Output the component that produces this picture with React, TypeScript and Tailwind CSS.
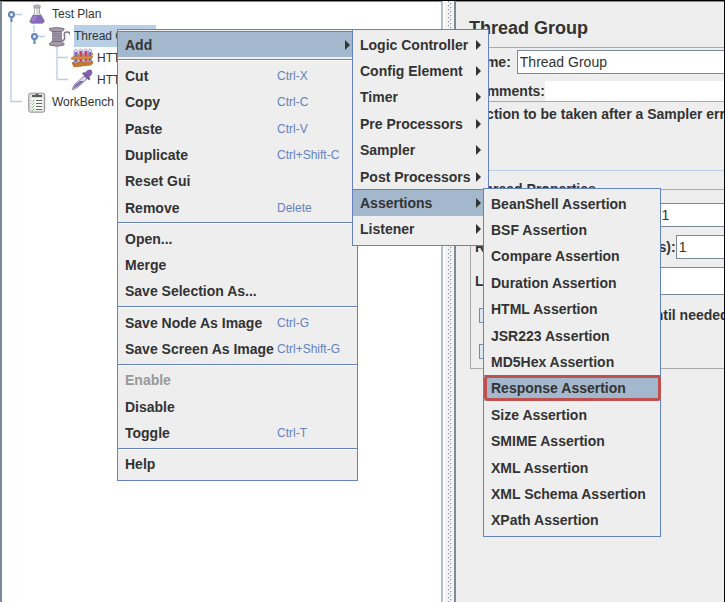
import type { ReactNode } from "react";

type Entry = { label: string; keys?: string; submenu?: boolean; active?: boolean; disabled?: boolean; marked?: boolean };

const contextGroups: Entry[][] = [
  [{ label: "Add", submenu: true, active: true }],
  [
    { label: "Cut", keys: "Ctrl-X" },
    { label: "Copy", keys: "Ctrl-C" },
    { label: "Paste", keys: "Ctrl-V" },
    { label: "Duplicate", keys: "Ctrl+Shift-C" },
    { label: "Reset Gui" },
    { label: "Remove", keys: "Delete" },
  ],
  [{ label: "Open..." }, { label: "Merge" }, { label: "Save Selection As..." }],
  [
    { label: "Save Node As Image", keys: "Ctrl-G" },
    { label: "Save Screen As Image", keys: "Ctrl+Shift-G" },
  ],
  [{ label: "Enable", disabled: true }, { label: "Disable" }, { label: "Toggle", keys: "Ctrl-T" }],
  [{ label: "Help" }],
];

const addEntries: Entry[] = [
  { label: "Logic Controller", submenu: true },
  { label: "Config Element", submenu: true },
  { label: "Timer", submenu: true },
  { label: "Pre Processors", submenu: true },
  { label: "Sampler", submenu: true },
  { label: "Post Processors", submenu: true },
  { label: "Assertions", submenu: true, active: true },
  { label: "Listener", submenu: true },
];

const assertionEntries: Entry[] = [
  { label: "BeanShell Assertion" },
  { label: "BSF Assertion" },
  { label: "Compare Assertion" },
  { label: "Duration Assertion" },
  { label: "HTML Assertion" },
  { label: "JSR223 Assertion" },
  { label: "MD5Hex Assertion" },
  { label: "Response Assertion", active: true, marked: true },
  { label: "Size Assertion" },
  { label: "SMIME Assertion" },
  { label: "XML Assertion" },
  { label: "XML Schema Assertion" },
  { label: "XPath Assertion" },
];

function MenuItem({ entry }: { entry: Entry }) {
  const look = entry.active ? "bg-[#a3b8cc] border-[#6382bf]" : "border-transparent";
  return (
    <button
      type="button"
      role="menuitem"
      disabled={entry.disabled}
      aria-haspopup={entry.submenu ? "menu" : undefined}
      className={`relative flex min-h-0 w-full flex-1 items-center whitespace-nowrap border-t pl-[7px] text-left text-sm font-bold ${look} ${entry.disabled ? "text-[#999999]" : "text-[#333333]"}`}
    >
      <span className="flex-1">{entry.label}</span>
      {entry.keys && <span className="w-20 text-xs font-normal text-[#6382bf]">{entry.keys}</span>}
      {entry.submenu && (
        <svg className="mr-[7px] h-[10px] w-[5px]" viewBox="0 0 5 10" aria-hidden="true">
          <path d="M0 0L5 5L0 10Z" fill="#333333" />
        </svg>
      )}
      {entry.marked && <span className="absolute -right-px -top-px bottom-0 left-0 rounded-sm border-[3px] border-[#c0504d]" />}
    </button>
  );
}

function Menu({ label, place, children }: { label: string; place: string; children: ReactNode }) {
  return (
    <div role="menu" aria-label={label} className={`absolute flex flex-col border border-[#6382bf] bg-[#eeeeee] pb-[3px] pt-px ${place}`}>
      {children}
    </div>
  );
}

function FlaskIcon() {
  return (
    <svg width="20" height="20" viewBox="0 0 20 20" aria-hidden="true">
      <path d="M7.500 3h5v6l4.500 7q1 3-2 3.500H5Q2 19 3 16l4.500-7z" fill="#d8d8df" stroke="#95959e" strokeWidth="0.800" />
      <path d="M6 11h8l3 5q1 2.500-2 3H5q-2.500-.5-1.500-3z" fill="#8468bb" />
      <path d="M5.500 14l2-2.500h3l-3 5.500H4.500z" fill="#a58bd1" opacity=".7" />
      <ellipse cx="10" cy="2.500" rx="3.500" ry="1.500" fill="#bcbcc4" stroke="#85858d" strokeWidth=".8" />
      <path d="M8.500 5v5" stroke="#fff" strokeWidth="1.300" />
    </svg>
  );
}

function SpoolIcon() {
  return (
    <svg width="22" height="21" viewBox="0 0 22 21" aria-hidden="true">
      <path d="M4 4h10v13H4z" fill="#8d8295" />
      <path d="M4 6.500h10M4 9h10M4 11.500h10M4 14h10" stroke="#a297aa" />
      <path d="M1.500 2.500Q8 .3 16 2.500v1.500L13.500 5.500H4L1.500 4z" fill="#a49aaa" stroke="#706779" strokeWidth=".8" />
      <path d="M4 15.500h10l2 2v1.500Q9 21.500 1.500 19v-1.500z" fill="#a49aaa" stroke="#706779" strokeWidth=".8" />
      <path d="M14 15q3.500-1 2.500-5T19 6t2.500 2.500" fill="none" stroke="#81768a" strokeWidth="1.500" />
    </svg>
  );
}

function TubesIcon() {
  return (
    <svg width="22" height="20" viewBox="0 0 22 20" aria-hidden="true">
      <path d="M3 6l19-1v2L3 9.500zM1 14l19-1 2 1-2 3-17 2z" fill="#bf7632" />
      <g stroke="#9991b3" strokeWidth=".7">
        <rect x="3" y="1.500" width="3.500" height="14" rx="1.700" fill="#e3dff2" />
        <rect x="8" y="1" width="3.500" height="14" rx="1.700" fill="#e3dff2" />
        <rect x="13" y="1" width="3.500" height="14" rx="1.700" fill="#e3dff2" />
        <rect x="17.500" y="1" width="3" height="13" rx="1.500" fill="#e3dff2" />
      </g>
      <path d="M3.500 4h2.600v10H3.500zM17.800 4h2.300v9h-2.300z" fill="#7868c2" />
      <path d="M8.500 3h2.600v11H8.500z" fill="#d43f60" />
      <path d="M13.500 3h2.600v10.500h-2.600z" fill="#c33e72" />
      <path d="M.5 9.500l2-1 19-.5v1.500l-2 1.500-19 .5z" fill="#d58b43" stroke="#986029" strokeWidth=".4" />
      <path d="M1 15l19-1 2-1v2l-2 2-17 2z" fill="#c6782f" stroke="#986029" strokeWidth=".4" />
    </svg>
  );
}

function DropperIcon() {
  return (
    <svg width="22" height="22" viewBox="0 0 22 22" aria-hidden="true">
      <path d="M13 7l3 3-9 8-5 3-1-1 3-5z" fill="#d9d4e6" stroke="#8f88a0" strokeWidth=".9" />
      <path d="M4 16l5-4h4l-6 5-5 3z" fill="#8266b8" />
      <path d="M14 4q3-4 6-3 2 2 0 5l-3 3z" fill="#8162b5" stroke="#6f52a3" strokeWidth=".6" />
      <path d="M11 4.500l7 7 1.500-2-6.500-6.500z" fill="#75579f" />
    </svg>
  );
}

function ClipboardIcon() {
  return (
    <svg width="18" height="21" viewBox="0 0 18 21" aria-hidden="true">
      <rect x=".7" y="1.200" width="16" height="19" rx="2" fill="#dedede" stroke="#929292" />
      <path d="M3 6h11.500v12.500H3z" fill="#fbfbfb" />
      <path d="M4 5V3h3q2-3 4 0h3v2z" fill="#5d5d5d" />
      <path d="M8 8.500h6M8 11.500h6M8 14.500h6M8 17.500h6" stroke="#666" strokeWidth="1.200" />
      <path d="M3.500 8.500l1 1 2-2M3.500 11.500l1 1 2-2M3.500 14.500l1 1 2-2M3.500 17.500l1 1 2-2" fill="none" stroke="#69b957" />
    </svg>
  );
}

function TreeLines() {
  return (
    <svg className="absolute left-0 top-0" width="72" height="112" viewBox="0 0 72 112" fill="none" aria-hidden="true">
      <path d="M9 15V99.500H20M32 23V30M55 44V77.500H66M55 55.500H66M13 12.500h7M36 34.500h7" stroke="#b8cfe5" strokeWidth="1.300" />
      <g stroke="#6285ba" strokeWidth="2">
        <circle cx="9.500" cy="12.500" r="2.500" fill="#e8f1fb" />
        <path d="M9.500 15v5" />
        <circle cx="32.500" cy="34.500" r="2.500" fill="#e8f1fb" />
        <path d="M32.500 37v5" />
      </g>
    </svg>
  );
}

function TreeRow({ icon, indent, children }: { icon: ReactNode; indent: string; children: ReactNode }) {
  return (
    <li className={`flex h-[22px] items-center gap-1 whitespace-nowrap ${indent}`}>
      <span className="flex w-[22px] justify-center">{icon}</span>
      {children}
    </li>
  );
}

const field = "h-6 min-w-0 flex-1 border border-r-0 border-[#7a8a99] bg-white px-[2px] font-normal outline-none";

export default function App() {
  return (
    <div className="relative flex min-h-screen overflow-hidden border-r border-t border-black bg-[#eeeeee] font-['Liberation_Sans',Arial,sans-serif] text-sm text-[#333333]">
      <aside className="relative w-[443px] shrink-0 border-l-2 border-r-2 border-t border-l-[#7a8a99] border-r-[#b3bfcd] border-t-[#7a8a99] bg-white">
        <TreeLines />
        <ul className="relative pt-px text-xs">
          <TreeRow icon={<FlaskIcon />} indent="pl-6">Test Plan</TreeRow>
          <TreeRow icon={<SpoolIcon />} indent="pl-[46px]">
            <span className="flex h-[22px] w-[82px] items-center bg-[#b8cfe5]">Thread Group</span>
          </TreeRow>
          <TreeRow icon={<TubesIcon />} indent="pl-[69px]">HTTP Request Defaults</TreeRow>
          <TreeRow icon={<DropperIcon />} indent="pl-[69px]">HTTP Request</TreeRow>
          <TreeRow icon={<ClipboardIcon />} indent="pl-6">WorkBench</TreeRow>
        </ul>
      </aside>

      <div className="flex w-[11px] shrink-0 justify-end border-l-2 border-white bg-[#f4f4f4] pr-[2px]" role="separator" aria-orientation="vertical">
        <svg className="h-full w-[5px]" aria-hidden="true">
          <defs>
            <pattern id="grip" width="5" height="4" patternUnits="userSpaceOnUse">
              <path d="M1 0h1v1H1zM3 2h1v1H3z" fill="#8593a3" />
              <path d="M2 0h1v1H2zM1 1h1v1H1zM4 2h1v1H4zM3 3h1v1H3z" fill="#d5dae0" />
            </pattern>
          </defs>
          <rect width="5" height="100%" fill="url(#grip)" />
        </svg>
      </div>

      <main className="min-w-0 flex-1 overflow-hidden whitespace-nowrap border-l-2 border-t border-[#7a8a99] font-bold">
        <h1 className="ml-[13px] pb-[7px] pt-[14px] text-lg leading-6">Thread Group</h1>
        <div className="ml-3 border-t border-[#aaaaaa] pt-[2px]">
          <div className="flex items-center gap-1.5">
            <label htmlFor="name">Name:</label>
            <input id="name" className={field} defaultValue="Thread Group" />
          </div>
          <div className="mt-[7px] flex h-5 items-center">
            <label htmlFor="comments">Comments:</label>
            <input id="comments" className="h-5 min-w-0 flex-1 bg-white outline-none" />
          </div>
        </div>
        <section className="ml-3 h-[70px] border-b border-t border-b-[#b8cfe5] border-t-[#aaaaaa] pl-2 pt-[2px]">
          <h2>Action to be taken after a Sampler error</h2>
        </section>
        <fieldset className="ml-[14px] mt-2 h-[190px] border border-r-0 border-[#aaaaaa] pl-1">
          <legend className="px-px">Thread Properties</legend>
          <div className="flex flex-col gap-2 pt-1">
            <div className="flex items-center">
              <label htmlFor="threads">Number of Threads (users):</label>
              <input id="threads" className={field} defaultValue="1" />
            </div>
            <div className="flex items-center">
              <label htmlFor="ramp">Ramp-Up Period (in seconds):</label>
              <input id="ramp" className={field} defaultValue="1" />
            </div>
            <div className="flex items-center gap-2">
              <label htmlFor="loops">Loop Count:</label>
              <input id="loops" className="h-7 min-w-0 flex-1 border-y border-[#7a8a99] bg-white outline-none" />
            </div>
          </div>
          <div className="ml-1 mt-2.5 flex flex-col gap-4">
            <label className="flex items-center gap-0.5">
              <input type="checkbox" className="size-[15px] appearance-none border border-[#7a8a99] bg-[#dce8f4]" />
              Delay Thread creation until needed
            </label>
            <label className="flex items-center gap-0.5">
              <input type="checkbox" className="size-[15px] appearance-none border border-[#7a8a99] bg-[#dce8f4]" />
              Scheduler
            </label>
          </div>
        </fieldset>
      </main>

      <Menu label="Thread Group actions" place="left-[117px] top-7 h-[452px] w-[241px]">
        {contextGroups.map((group, i) => (
          <div key={group[0].label} className="contents">
            {i > 0 && (
              <div role="separator" className="h-[5px] shrink-0 py-[2px]">
                <div className="border-b border-t border-b-white border-t-[#6382bf]" />
              </div>
            )}
            {group.map((entry) => <MenuItem key={entry.label} entry={entry} />)}
          </div>
        ))}
      </Menu>
      <Menu label="Add" place="left-[352px] top-7 h-[217px] w-[137px]">
        {addEntries.map((entry) => <MenuItem key={entry.label} entry={entry} />)}
      </Menu>
      <Menu label="Assertions" place="left-[483px] top-[187px] h-[349px] w-[178px]">
        {assertionEntries.map((entry) => <MenuItem key={entry.label} entry={entry} />)}
      </Menu>
    </div>
  );
}
